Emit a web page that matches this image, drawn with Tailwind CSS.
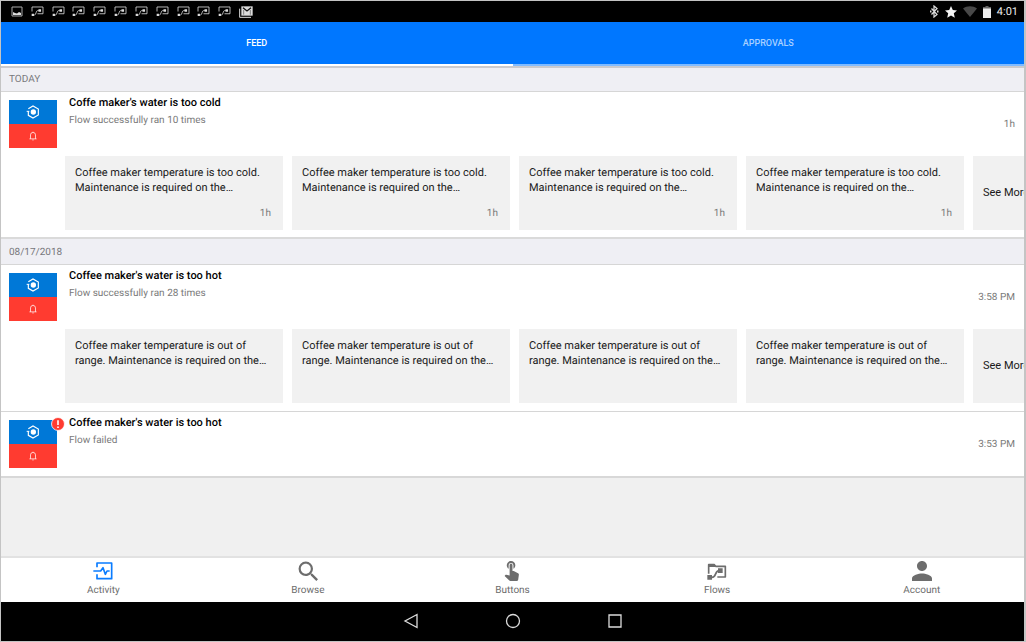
<!DOCTYPE html>
<html lang="en">
<head>
<meta charset="utf-8">
<meta name="viewport" content="width=device-width, initial-scale=1">
<title>Activity</title>
<script src="https://cdn.jsdelivr.net/npm/@tailwindcss/browser@4"></script>
</head>
<body class="font-['Roboto',sans-serif] text-[#1a1a1a] [text-rendering:geometricPrecision]">
<svg class="hidden" aria-hidden="true">
  <symbol id="flow" viewBox="0 0 40 34"><path d="M3 17V3h34v21H20" fill="none" stroke="currentColor" stroke-width="2.500"/><path d="M6 28h4c7 0 4-14 11-14h3" fill="none" stroke="currentColor" stroke-width="2.500"/><path d="M2 24h7v7H2zM23 10h8v8h-8z" fill="currentColor"/></symbol>
  <symbol id="connector" viewBox="0 0 42 42"><path d="M7 11 21 3l16 9v18l-16 9-14-8V19" fill="none" stroke="currentColor" stroke-width="3.500"/><path d="M2 19h8" fill="none" stroke="currentColor" stroke-width="3"/><circle cx="22" cy="21" r="8" fill="currentColor"/></symbol>
  <symbol id="bell" viewBox="0 0 24 28"><path d="M2 22h20M5 22V11a7 7 0 0 1 14 0v11M10 25h4M12 4V2" fill="none" stroke="currentColor" stroke-width="2"/></symbol>
</svg>
<div class="flex h-screen flex-col overflow-hidden border border-r-2 border-[#c4c4c4] bg-[#f0f0f0]">
  <header class="shrink-0">
    <div class="flex h-[21px] items-center justify-between bg-black pr-1.5 pl-[10px] text-[#dcdcdc]">
      <div class="flex w-[242px] items-center justify-between">
        <svg class="h-[11px] w-3" viewBox="0 0 24 22"><path d="M2 2h20v18H2z" fill="none" stroke="#aaa" stroke-width="2"/><path d="M4 18v-6l4 2 4 1 4-3 4 2v4z" fill="currentColor"/></svg>
        <svg class="h-[11px] w-[13px]"><use href="#flow"/></svg>
        <svg class="h-[11px] w-[13px]"><use href="#flow"/></svg>
        <svg class="h-[11px] w-[13px]"><use href="#flow"/></svg>
        <svg class="h-[11px] w-[13px]"><use href="#flow"/></svg>
        <svg class="h-[11px] w-[13px]"><use href="#flow"/></svg>
        <svg class="h-[11px] w-[13px]"><use href="#flow"/></svg>
        <svg class="h-[11px] w-[13px]"><use href="#flow"/></svg>
        <svg class="h-[11px] w-[13px]"><use href="#flow"/></svg>
        <svg class="h-[11px] w-[13px]"><use href="#flow"/></svg>
        <svg class="h-[11px] w-[13px]"><use href="#flow"/></svg>
        <svg class="h-3 w-[14px]" viewBox="0 0 42 36"><path d="M2 8v26h34" fill="none" stroke="currentColor" stroke-width="3"/><path d="M7 1h34v28H7z" fill="currentColor"/><path d="M12 5l12 10L36 5" fill="none" stroke="#111" stroke-width="4"/><path d="M14 12v14M34 12v14" stroke="#555" stroke-width="2"/></svg>
      </div>
      <div class="flex items-center">
        <svg class="mr-1.5 h-[13px] w-[9px]" viewBox="0 0 18 26"><path d="m3 7 11 12-6 5V2l6 5L3 19" fill="none" stroke="currentColor" stroke-width="2.500"/><path d="M0 11h3v4H0zM14 11h3v4h-3z" fill="currentColor"/></svg>
        <svg class="mr-1.5 h-3 w-3" viewBox="0 0 24 24"><path d="m12 0 3.600 8 8.400.8-6.400 5.800 2 8.900L12 18.800l-7.600 4.700 2-8.900L0 8.800 8.400 8z" fill="#f4f4f4"/></svg>
        <svg class="mr-1.5 h-[11px] w-[14px]" viewBox="0 0 28 22"><path d="M0 5C8-1 20-1 28 5L14 22z" fill="#484848"/></svg>
        <svg class="mr-1.5 h-3 w-2" viewBox="0 0 16 24"><path d="M5 0h6v2h5v5H0V2h5z" fill="#666"/><path d="M0 5h16v19H0z" fill="#ececec"/></svg>
        <span class="text-[11px] leading-4 text-[#ececec]">4:01</span>
      </div>
    </div>
    <div class="flex h-11 bg-[#0077ff] text-[9px] font-medium" role="tablist">
      <button type="button" role="tab" aria-selected="true" class="flex-1 border-b-2 border-white pt-0.5 text-white">FEED</button>
      <button type="button" role="tab" aria-selected="false" class="flex-1 border-b-2 border-[#80bbff] pt-0.5 text-[#a8d0ff]">APPROVALS</button>
    </div>
  </header>

  <main class="min-h-0 flex-1 overflow-hidden text-[11px]">
    <h2 class="flex h-[26px] items-center border-t-2 border-b border-t-[#cbcbcf] border-b-[#d6d6d6] bg-[#efeff4] pl-2 text-[10px] text-[#77777b]">TODAY</h2>
    <article class="border-b-2 border-[#dadada] bg-white pb-[7px]">
      <div class="flex gap-3 pr-[9px] pl-2">
        <div class="mt-2 grid h-12 w-12 grid-rows-2 text-white">
          <div class="grid place-items-center bg-[#0078d7]"><svg class="h-3.5 w-3.5"><use href="#connector"/></svg></div>
          <div class="grid place-items-center bg-[#ff3b30]"><svg class="h-2.5 w-2.5"><use href="#bell"/></svg></div>
        </div>
        <div class="flex-1 pt-[3px]"><h3 class="leading-4 font-medium text-black">Coffe maker's water is too cold</h3><p class="mt-0.5 text-[10px] leading-4 text-[#7a7a7a]">Flow successfully ran 10 times</p></div>
        <time class="mt-2 self-center text-[10px] text-[#7a7a7a]">1h</time>
      </div>
      <div class="mt-2 ml-16 flex gap-[9px] overflow-hidden">
        <div class="h-[74px] w-[218px] shrink-0 bg-[#f1f1f1] px-2.5 pt-[9px] leading-[15px]"><p>Coffee maker temperature is too cold. Maintenance is required on the…</p><p class="mt-[11px] pr-0.5 text-right text-[10px] text-[#7a7a7a]">1h</p></div>
        <div class="h-[74px] w-[218px] shrink-0 bg-[#f1f1f1] px-2.5 pt-[9px] leading-[15px]"><p>Coffee maker temperature is too cold. Maintenance is required on the…</p><p class="mt-[11px] pr-0.5 text-right text-[10px] text-[#7a7a7a]">1h</p></div>
        <div class="h-[74px] w-[218px] shrink-0 bg-[#f1f1f1] px-2.5 pt-[9px] leading-[15px]"><p>Coffee maker temperature is too cold. Maintenance is required on the…</p><p class="mt-[11px] pr-0.5 text-right text-[10px] text-[#7a7a7a]">1h</p></div>
        <div class="h-[74px] w-[218px] shrink-0 bg-[#f1f1f1] px-2.5 pt-[9px] leading-[15px]"><p>Coffee maker temperature is too cold. Maintenance is required on the…</p><p class="mt-[11px] pr-0.5 text-right text-[10px] text-[#7a7a7a]">1h</p></div>
        <button type="button" class="h-[74px] shrink-0 bg-[#f1f1f1] px-2.5">See More</button>
      </div>
    </article>

    <h2 class="flex h-[26px] items-center border-b border-[#d6d6d6] bg-[#efeff4] pt-px pl-2 text-[10px] text-[#77777b]">08/17/2018</h2>
    <article class="border-b border-[#d6d6d6] bg-white pb-2">
      <div class="flex gap-3 pr-[9px] pl-2">
        <div class="mt-2 grid h-12 w-12 grid-rows-2 text-white">
          <div class="grid place-items-center bg-[#0078d7]"><svg class="h-3.5 w-3.5"><use href="#connector"/></svg></div>
          <div class="grid place-items-center bg-[#ff3b30]"><svg class="h-2.5 w-2.5"><use href="#bell"/></svg></div>
        </div>
        <div class="flex-1 pt-[3px]"><h3 class="leading-4 font-medium text-black">Coffee maker's water is too hot</h3><p class="mt-0.5 text-[10px] leading-4 text-[#7a7a7a]">Flow successfully ran 28 times</p></div>
        <time class="mt-2 self-center text-[10px] text-[#7a7a7a]">3:58 PM</time>
      </div>
      <div class="mt-2 ml-16 flex gap-[9px] overflow-hidden">
        <p class="h-[74px] w-[218px] shrink-0 bg-[#f1f1f1] px-2.5 pt-[9px] leading-[15px]">Coffee maker temperature is out of range. Maintenance is required on the…</p>
        <p class="h-[74px] w-[218px] shrink-0 bg-[#f1f1f1] px-2.5 pt-[9px] leading-[15px]">Coffee maker temperature is out of range. Maintenance is required on the…</p>
        <p class="h-[74px] w-[218px] shrink-0 bg-[#f1f1f1] px-2.5 pt-[9px] leading-[15px]">Coffee maker temperature is out of range. Maintenance is required on the…</p>
        <p class="h-[74px] w-[218px] shrink-0 bg-[#f1f1f1] px-2.5 pt-[9px] leading-[15px]">Coffee maker temperature is out of range. Maintenance is required on the…</p>
        <button type="button" class="h-[74px] shrink-0 bg-[#f1f1f1] px-2.5">See More</button>
      </div>
    </article>

    <article class="border-b-2 border-[#d8d8d8] bg-white pb-2">
      <div class="flex gap-3 pr-[9px] pl-2">
        <div class="relative mt-2 grid h-12 w-12 grid-rows-2 text-white">
          <div class="grid place-items-center bg-[#0078d7]"><svg class="h-3.5 w-3.5"><use href="#connector"/></svg></div>
          <div class="grid place-items-center bg-[#ff3b30]"><svg class="h-2.5 w-2.5"><use href="#bell"/></svg></div>
          <svg class="absolute -top-[3px] -right-2 h-[14px] w-[14px]" viewBox="0 0 26 26" role="img" aria-label="Failed"><circle cx="13" cy="13" r="12" fill="#ff3b30" stroke="#fff" stroke-width="1.500"/><path d="M13 6v9M13 17.500v3" stroke="#fff" stroke-width="3"/></svg>
        </div>
        <div class="flex-1 pt-[3px]"><h3 class="leading-4 font-medium text-black">Coffee maker's water is too hot</h3><p class="mt-0.5 text-[10px] leading-4 text-[#7a7a7a]">Flow failed</p></div>
        <time class="mt-2 self-center text-[10px] text-[#7a7a7a]">3:53 PM</time>
      </div>
    </article>
  </main>

  <nav class="grid h-[46px] shrink-0 grid-cols-5 border-t-2 border-[#e2e2e2] bg-white text-[10px] leading-3 text-[#6d6d6d]">
    <a href="#" aria-current="page" class="flex flex-col items-center gap-1 pt-[3px]"><svg class="h-5 w-5" viewBox="0 0 60 60" fill="none" stroke="#0a7cff" stroke-width="5"><path d="M12 19V6h44v47H12V40M1 30h22l7-10 7 20 5-10h8" stroke-linejoin="round"/></svg>Activity</a>
    <a href="#" class="flex flex-col items-center gap-1 pt-[3px]"><svg class="h-5 w-5" viewBox="2.500 2.500 18 18" fill="currentColor"><path d="M15.500 14h-.79l-.28-.27A6.471 6.471 0 0 0 16 9.500 6.500 6.500 0 1 0 9.500 16c1.610 0 3.090-.59 4.230-1.570l.27.28v.79l5 4.990L20.490 19l-4.990-5zm-6 0C7.010 14 5 11.990 5 9.500S7.010 5 9.500 5 14 7.010 14 9.500 11.990 14 9.500 14z"/></svg>Browse</a>
    <a href="#" class="flex flex-col items-center gap-1 pt-[3px]"><svg class="h-5 w-5" viewBox="2 3 21 21" fill="currentColor"><path d="M9 11.240V7.500a2.500 2.500 0 0 1 5 0v3.740c1.210-.81 2-2.180 2-3.740C16 5.010 13.990 3 11.500 3S7 5.010 7 7.500c0 1.560.79 2.930 2 3.740zm9.840 4.630-4.540-2.260c-.17-.07-.35-.11-.54-.11H13v-6c0-.83-.67-1.500-1.500-1.500S10 6.670 10 7.500v10.740l-3.430-.72c-.08-.01-.15-.03-.24-.03-.31 0-.59.13-.79.33l-.79.8 4.940 4.940c.27.27.65.44 1.060.44h6.790c.75 0 1.330-.55 1.440-1.280l.75-5.270c.01-.07.02-.14.02-.2 0-.62-.38-1.160-.91-1.380z"/></svg>Buttons</a>
    <a href="#" class="flex flex-col items-center gap-1 pt-[3px]"><svg class="h-5 w-5" viewBox="0 0 60 60" fill="none" stroke="currentColor" stroke-width="5"><path d="M5 38V11h17l4 5h29v32H31M8 49h7c14 0 7-20 22-20h5" stroke-linejoin="round"/><path d="M1 42h14v14H1zM33 22h14v14H33zM5 9h17l4 9H5z" fill="currentColor" stroke="none"/></svg>Flows</a>
    <a href="#" class="flex flex-col items-center gap-1 pt-[3px]"><svg class="h-5 w-5" viewBox="4 4 16 16" fill="currentColor"><path d="M12 12c2.210 0 4-1.790 4-4s-1.790-4-4-4-4 1.790-4 4 1.790 4 4 4zm0 2c-2.670 0-8 1.340-8 4v2h16v-2c0-2.660-5.330-4-8-4z"/></svg>Account</a>
  </nav>
  <footer class="flex h-[39px] shrink-0 items-center justify-center gap-[86px] bg-black pb-px text-[#dcdcdc]">
    <button type="button" aria-label="Back"><svg class="block h-4 w-4" viewBox="0 0 16 16"><path d="M14 1.500v13L2 8z" fill="none" stroke="currentColor" stroke-width="1.300"/></svg></button>
    <button type="button" aria-label="Home"><svg class="block h-4 w-4" viewBox="0 0 16 16"><circle cx="8" cy="8" r="6.500" fill="none" stroke="currentColor" stroke-width="1.300"/></svg></button>
    <button type="button" aria-label="Recent apps"><svg class="block h-4 w-4" viewBox="0 0 16 16"><path d="M2 2h12v12H2z" fill="none" stroke="currentColor" stroke-width="1.300"/></svg></button>
  </footer>
</div>
</body>
</html>
